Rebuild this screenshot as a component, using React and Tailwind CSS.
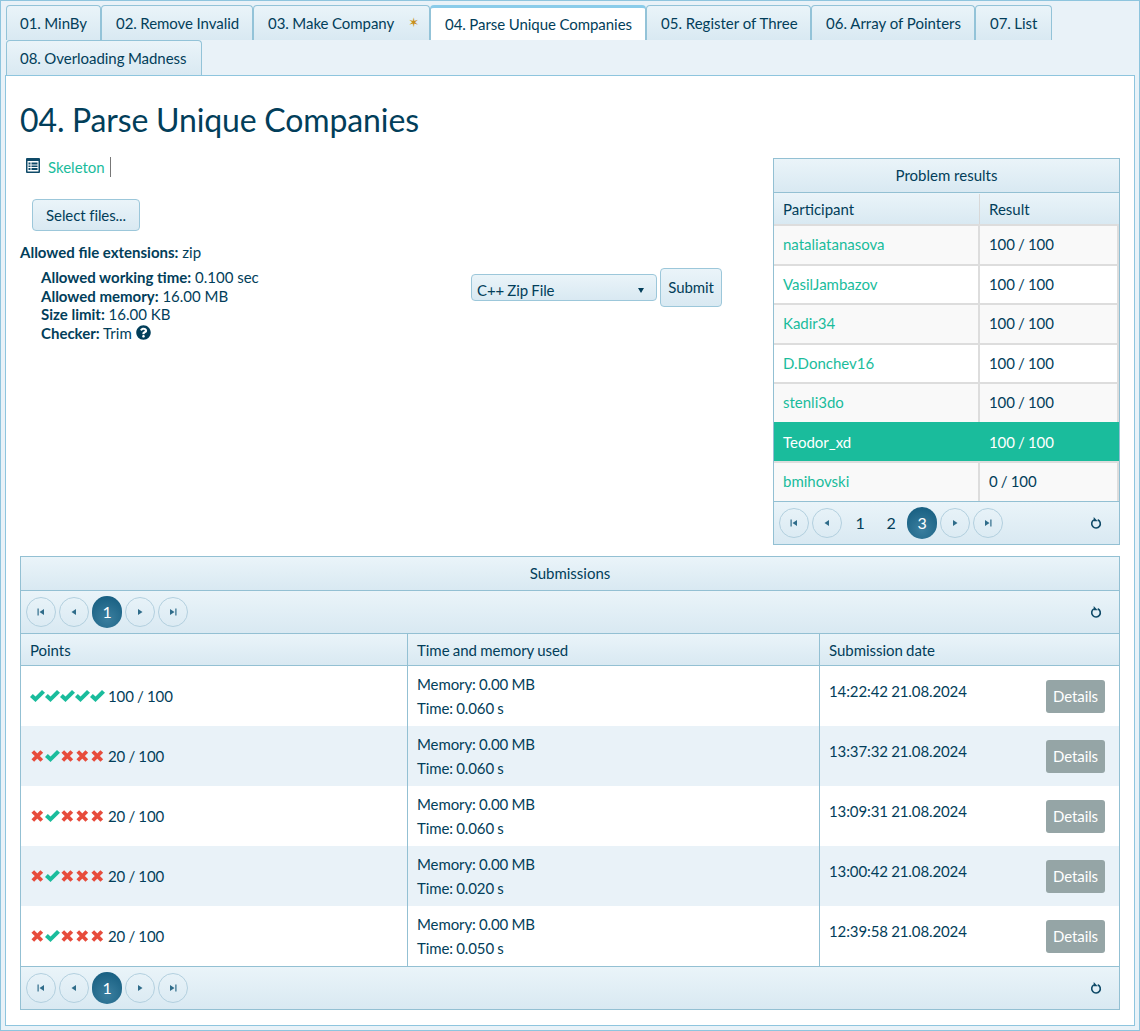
import React from 'react';
import { FaQuestionCircle } from 'react-icons/fa';

const tight = 'tracking-[-0.04px] [word-spacing:-0.3px]';
const tabs = [
  { label: '01. MinBy', w: `w-[95px] pl-[13px] ${tight}` },
  { label: '02. Remove Invalid', w: `w-[152px] pl-[14px] ${tight}` },
  { label: '03. Make Company', w: `w-[177px] pl-[14px] ${tight}`, star: true },
  { label: '04. Parse Unique Companies', w: `w-[216px] pl-[14px] ${tight}`, active: true },
  { label: '05. Register of Three', w: 'w-[165px] pl-[14px] tracking-normal [word-spacing:0]' },
  { label: '06. Array of Pointers', w: 'w-[164px] pl-[14px] tracking-normal [word-spacing:0]' },
  { label: '07. List', w: `w-[77px] pl-[14px] ${tight}` },
  { label: '08. Overloading Madness', w: `w-[196px] pl-[13px] ${tight}` },
];

const results = [
  { name: 'nataliatanasova', score: '100 / 100', alt: true },
  { name: 'VasilJambazov', score: '100 / 100' },
  { name: 'Kadir34', score: '100 / 100', alt: true },
  { name: 'D.Donchev16', score: '100 / 100' },
  { name: 'stenli3do', score: '100 / 100', alt: true },
  { name: 'Teodor_xd', score: '100 / 100', me: true },
  { name: 'bmihovski', score: '0 / 100', alt: true },
];

const submissions = [
  { marks: [1, 1, 1, 1, 1], points: '100 / 100', time: '0.060', date: '14:22:42 21.08.2024' },
  { marks: [0, 1, 0, 0, 0], points: '20 / 100', time: '0.060', date: '13:37:32 21.08.2024', alt: true },
  { marks: [0, 1, 0, 0, 0], points: '20 / 100', time: '0.060', date: '13:09:31 21.08.2024' },
  { marks: [0, 1, 0, 0, 0], points: '20 / 100', time: '0.020', date: '13:00:42 21.08.2024', alt: true },
  { marks: [0, 1, 0, 0, 0], points: '20 / 100', time: '0.050', date: '12:39:58 21.08.2024' },
];

const PagerIcon = ({ kind }) => (
  <svg width="12" height="12" viewBox="0 0 12 12" className="fill-[#2f6c8a]">
    {kind === 'first' && <path d="M2.500 2.500h1.200v7H2.500zM9 3v6L4.500 6z" />}
    {kind === 'prev' && <path d="M8 3v6L3.500 6z" />}
    {kind === 'next' && <path d="M4 3v6l4.500-3z" />}
    {kind === 'last' && <path d="M8.300 2.500h1.200v7H8.300zM3 3v6l4.500-3z" />}
  </svg>
);

const RoundBtn = ({ kind }) => (
  <span className="flex h-[30px] w-[30px] items-center justify-center rounded-full border border-[#b3d0df]">
    <PagerIcon kind={kind} />
  </span>
);

const Refresh = () => (
  <svg width="12" height="12" viewBox="0 0 12 12" fill="none" className="mr-[17px]">
    <path d="M3.900 2.900a4.300 4.300 0 1 0 3.800-.2" stroke="#0f4a68" strokeWidth="1.600" />
    <path d="M3.700 0v4.200h4z" fill="#0f4a68" />
  </svg>
);

const Check = () => (
  <svg width="15" height="12" viewBox="0 0 15 12" className="fill-[#1abc9c]">
    <path d="M0 7l2.800-3 2.700 2.600L12 0l3 2.800L5.500 12z" />
  </svg>
);

const Cross = () => (
  <svg width="15" height="12" viewBox="0 0 15 12" fill="none" stroke="#e74c3c" strokeWidth="3.800">
    <path d="M2.800 1.500l9 9M11.800 1.500l-9 9" />
  </svg>
);

const ListIcon = () => (
  <svg width="14" height="15" viewBox="0 0 14 15" className="mt-[-4px]">
    <rect width="14" height="15" rx="1" fill="#0f4a68" />
    <rect x="1.500" y="3" width="11" height="10.500" fill="#fff" />
    <path d="M2.500 4.500h2v2h-2zM5.500 4.500h6v2h-6zM2.500 7.500h2v1.500h-2zM5.500 7.500h6v1.500h-6zM2.500 10h2v2h-2zM5.500 10h6v2h-6z" fill="#0f4a68" />
  </svg>
);

const Pager = ({ pages, current, className }) => (
  <div className={`flex items-center justify-between bg-gradient-to-b from-[#eaf4f9] to-[#d9e9f2] pl-[5px] ${className}`}>
    <div className="flex items-center gap-[3px]">
      <RoundBtn kind="first" />
      <RoundBtn kind="prev" />
      {pages.map((p) =>
        p === current ? (
          <span key={p} className="flex h-[32px] w-[30px] items-center justify-center rounded-full bg-[radial-gradient(circle_at_50%_70%,#3b7f9f,#11597c)] text-[16px] text-white">
            {p}
          </span>
        ) : (
          <span key={p} className="flex h-[30px] w-[28px] items-center justify-center pl-[2px] text-[16px] text-[#023e5a]">
            {p}
          </span>
        )
      )}
      <RoundBtn kind="next" />
      <RoundBtn kind="last" />
    </div>
    <Refresh />
  </div>
);

const Tab = ({ tab }) => (
  <div
    className={`flex h-[35px] items-center rounded-t-[4px] border border-b-0 border-[#93c3d8] text-[15px] ${tab.w} ${
      tab.active
        ? 'border-t-[3px] border-t-[#8accea] bg-white'
        : 'bg-gradient-to-b from-[#eaf4f9] to-[#d9e9f2]'
    }`}
  >
    <span>{tab.label}</span>
    {tab.star && <span className="ml-[14px] font-['DejaVu_Sans',sans-serif] text-[13px] text-[#c8901a]">✶</span>}
  </div>
);

export default function App() {
  return (
    <div className="h-[1031px] w-[1140px] border border-[#8ec5de] bg-[#e9f2f8] p-[4px] font-['Lato',sans-serif] text-[15px] tracking-[-0.1px] text-[#023e5a] [word-spacing:-0.5px]">
      <div className="flex flex-wrap pl-[1px]">
        {tabs.map((t) => (
          <Tab key={t.label} tab={t} />
        ))}
      </div>

      <div className="h-[951px] border border-[#8ec5de] bg-white px-[14px]">
        <h1 className="pt-[25px] text-[32px] leading-[38px]">04. Parse Unique Companies</h1>

        <div className="mt-[19px] flex justify-between">
          <div className="flex w-[720px]">
            <div className="w-[451px] tracking-normal [word-spacing:0]">
              <div className="-mt-[1px] flex items-center pl-[6px]">
                <ListIcon />
                <span className="ml-[8px] border-r border-[#777] pr-[5px] leading-[20px] text-[#1abc9c]">Skeleton</span>
              </div>
              <button className="mt-[22px] ml-[12px] flex h-[32px] w-[108px] items-center justify-center rounded-[4px] border border-[#9cc7da] bg-gradient-to-b from-[#eaf4f9] to-[#d9e9f2] tracking-[-0.1px]">
                Select files...
              </button>
              <p className="mt-[12px] leading-[19px]">
                <b>Allowed file extensions:</b> zip
              </p>
              <div className="mt-[6px] pl-[21px] leading-[18.5px]">
                <p>
                  <b>Allowed working time:</b> 0.100 sec
                </p>
                <p>
                  <b>Allowed memory:</b> 16.00 MB
                </p>
                <p>
                  <b>Size limit:</b> 16.00 KB
                </p>
                <p className="flex items-center gap-[4px]">
                  <span>
                    <b>Checker:</b> Trim
                  </span>
                  <FaQuestionCircle className="text-[15px]" />
                </p>
              </div>
            </div>
            <div className="flex items-center self-start pt-[110px]">
              <div className="flex h-[27px] w-[186px] items-center justify-between rounded-[4px] border border-[#9cc7da] bg-gradient-to-b from-[#eaf4f9] to-[#d9e9f2] pl-[5px] pr-[12px] pt-[6px]">
                <span>C++ Zip File</span>
                <svg width="6" height="5" viewBox="0 0 6 5" className="fill-[#023e5a]">
                  <path d="M0 0h6L3 5z" />
                </svg>
              </div>
              <button className="ml-[3px] h-[39px] w-[62px] rounded-[4px] border border-[#9cc7da] bg-gradient-to-b from-[#eaf4f9] to-[#d9e9f2]">
                Submit
              </button>
            </div>
          </div>

          <div className="w-[347px] self-start border border-[#93c0d3]">
            <div className="flex h-[34px] items-center justify-center border-b border-[#93c0d3] bg-gradient-to-b from-[#eaf4f9] to-[#d9e9f2] tracking-normal [word-spacing:0]">
              Problem results
            </div>
            <div className="flex h-[31px] items-center bg-gradient-to-b from-[#eaf4f9] to-[#d9e9f2] pt-[1px] tracking-normal">
              <div className="flex h-full w-[206px] items-center border-r border-[#d8d8d8] pl-[9px]">Participant</div>
              <div className="pl-[9px]">Result</div>
            </div>
            {results.map((r) => (
              <div
                key={r.name}
                className={`flex h-[39.57px] border-t-2 ${
                  r.me ? 'border-[#1abc9c] bg-[#1abc9c] text-white' : r.alt ? 'border-[#ddd] bg-[#f9f9f9]' : 'border-[#ddd] bg-white'
                }`}
              >
                <div className={`flex w-[206px] items-center pb-[1px] pl-[9px] tracking-normal ${r.me ? '' : 'border-r-2 border-[#ddd] text-[#1abc9c]'}`}>{r.name}</div>
                <div className={`flex flex-1 items-center pb-[1px] pl-[9px] ${r.me ? '' : 'border-r-2 border-[#ddd]'}`}>{r.score}</div>
              </div>
            ))}
            <Pager pages={[1, 2, 3]} current={3} className="h-[43px] border-t border-[#93c0d3]" />
          </div>
        </div>

        <div className="mt-[11px] border border-[#93c0d3]">
          <div className="flex h-[34px] items-center justify-center border-b border-[#93c0d3] bg-gradient-to-b from-[#eaf4f9] to-[#d9e9f2] tracking-normal">
            Submissions
          </div>
          <Pager pages={[1]} current={1} className="h-[43px] border-b border-[#93c0d3]" />
          <div className="grid h-[32px] grid-cols-[386px_412px_1fr] items-center border-b border-[#93c0d3] bg-gradient-to-b from-[#eaf4f9] to-[#d9e9f2] tracking-[-0.04px]">
            <div className="flex h-full items-center pl-[9px] pt-[1px]">Points</div>
            <div className="flex h-full items-center border-l border-[#93c0d3] pl-[9px] pt-[1px]">Time and memory used</div>
            <div className="flex h-full items-center border-l border-[#93c0d3] pl-[9px] pt-[1px]">Submission date</div>
          </div>
          {submissions.map((s) => (
            <div key={s.date} className={`grid h-[60px] grid-cols-[386px_412px_1fr] ${s.alt ? 'bg-[#e9f2f8]' : 'bg-white'}`}>
              <div className="flex items-center pl-[9px] pt-[1px]">
                <span className="flex items-center">
                  {s.marks.map((m, i) => (m ? <Check key={i} /> : <Cross key={i} />))}
                </span>
                <span className="ml-[3px]">{s.points}</span>
              </div>
              <div className="flex flex-col justify-center border-l border-[#93c0d3] pl-[9px] leading-[24px]">
                <span>Memory: 0.00 MB</span>
                <span>Time: {s.time} s</span>
              </div>
              <div className="flex justify-between border-l border-[#93c0d3] pl-[9px] pr-[14px]">
                <span className="pt-[15px] leading-[20px]">{s.date}</span>
                <button className="mt-[14px] h-[33px] w-[59px] rounded-[3px] bg-[#95a5a6] text-white">Details</button>
              </div>
            </div>
          ))}
          <Pager pages={[1]} current={1} className="h-[43px] border-t border-[#93c0d3]" />
        </div>
      </div>
    </div>
  );
}
